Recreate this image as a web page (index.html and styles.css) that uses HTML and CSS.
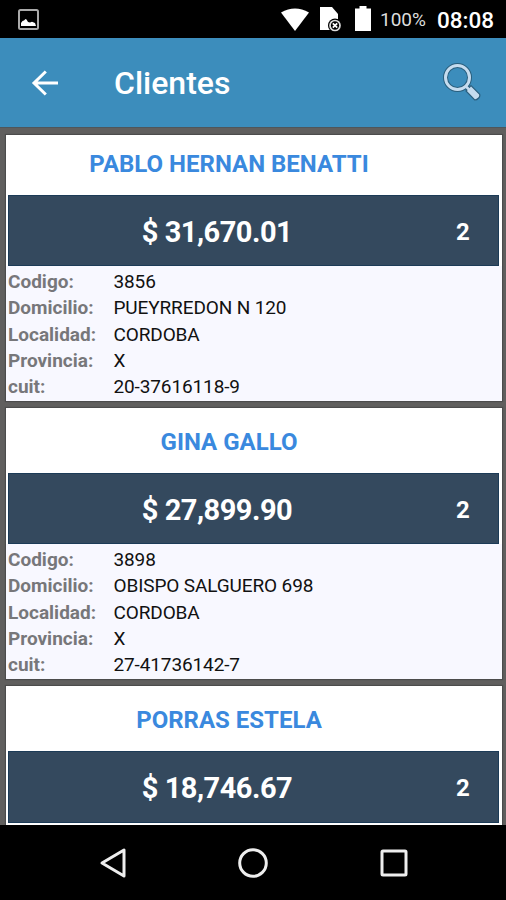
FILE: index.html
```
<!DOCTYPE html>
<html lang="es">
<head>
    <meta charset="utf-8">
    <title>Clientes</title>
    <link rel="stylesheet" href="styles.css">
</head>
<body>
    <div class="status-bar">
        <svg class="picture" width="21" height="21" viewBox="0 0 21 21">
            <rect x="1" y="1" width="19" height="19" rx="1.5" fill="none" stroke="#aaa" stroke-width="2"/>
            <path d="M3 17V14l1.500-2 1.500-.5 1.500-1.500 1 .5 1.500 2.500 2 .5 2-.8 3 1.300 1 3z" fill="#fff"/>
        </svg>
        <svg class="wifi" width="28" height="23" viewBox="0 0 28 23">
            <path d="M0 4.500Q14-3.500 28 4.500L14 23z" fill="#fff"/>
        </svg>
        <svg class="sim" width="22" height="25" viewBox="0 0 22 25">
            <path d="M0 0h12l6 7v16H0z" fill="#fff"/>
            <circle cx="15" cy="18.500" r="7" fill="#000"/>
            <circle cx="15" cy="18.500" r="5" fill="none" stroke="#ddd" stroke-width="1.700"/>
            <path d="M12.800 16.300l4.400 4.400M17.200 16.300l-4.400 4.400" stroke="#fff" stroke-width="1.800"/>
        </svg>
        <svg class="battery" width="16" height="25" viewBox="0 0 16 25">
            <path d="M4.500 0h7v2.500H16V25H0V2.500h4.500z" fill="#fff"/>
        </svg>
        <span class="percent">100%</span>
        <span class="clock">08:08</span>
    </div>

    <div class="toolbar">
        <svg class="back" width="28" height="28" viewBox="0 0 28 28">
            <path d="M14.800 2.500L3 14l11.800 11.500M3 14h24" fill="none" stroke="#fff" stroke-width="3"/>
        </svg>
        <h1>Clientes</h1>
        <svg class="search" width="38" height="39" viewBox="0 0 38 39">
            <circle cx="14.500" cy="14.500" r="12" fill="none" stroke="#2a5f7e" stroke-width="5"/>
            <path d="M22.500 23l4.500 4.500" stroke="#2a5f7e" stroke-width="5"/>
            <path d="M23 28l5-5.500 8.500 8.500q1 2-.8 4t-4 2z" fill="#c5dcef" stroke="#2a5f7e" stroke-width="1.200"/>
            <circle cx="14.500" cy="14.500" r="12" fill="none" stroke="#c5dcef" stroke-width="3"/>
            <path d="M22.500 23l4.500 4.500" stroke="#c5dcef" stroke-width="2.500"/>
        </svg>
    </div>

    <div class="list">
        <div class="card first">
            <h2>PABLO HERNAN BENATTI</h2>
            <div class="balance">
                <span class="amount">$ 31,670.01</span>
                <span class="count">2</span>
            </div>
            <dl>
                <dt>Codigo:</dt><dd>3856</dd>
                <dt>Domicilio:</dt><dd>PUEYRREDON N 120</dd>
                <dt>Localidad:</dt><dd>CORDOBA</dd>
                <dt>Provincia:</dt><dd>X</dd>
                <dt>cuit:</dt><dd>20-37616118-9</dd>
            </dl>
        </div>
        <div class="card">
            <h2>GINA GALLO</h2>
            <div class="balance">
                <span class="amount">$ 27,899.90</span>
                <span class="count">2</span>
            </div>
            <dl>
                <dt>Codigo:</dt><dd>3898</dd>
                <dt>Domicilio:</dt><dd>OBISPO SALGUERO 698</dd>
                <dt>Localidad:</dt><dd>CORDOBA</dd>
                <dt>Provincia:</dt><dd>X</dd>
                <dt>cuit:</dt><dd>27-41736142-7</dd>
            </dl>
        </div>
        <div class="card">
            <h2>PORRAS ESTELA</h2>
            <div class="balance">
                <span class="amount">$ 18,746.67</span>
                <span class="count">2</span>
            </div>
        </div>
    </div>

    <div class="nav-bar">
        <svg width="28" height="32" viewBox="0 0 28 32">
            <path d="M25 3v26L3 16z" fill="none" stroke="#eee" stroke-width="3" stroke-linejoin="round"/>
        </svg>
        <svg width="32" height="32" viewBox="0 0 32 32">
            <circle cx="15" cy="16" r="13.300" fill="none" stroke="#eee" stroke-width="3"/>
        </svg>
        <svg width="28" height="28" viewBox="0 0 28 28">
            <rect x="2" y="2" width="24" height="24" rx="1" fill="none" stroke="#eee" stroke-width="3"/>
        </svg>
    </div>
</body>
</html>
```

FILE: styles.css
```
* {
    box-sizing: border-box;
}

body {
    margin: 0;
    height: 900px;
    display: flex;
    flex-direction: column;
    overflow: hidden;
    background-color: #000;
    font-family: Roboto, sans-serif;
}

svg {
    display: block;
    flex-shrink: 0;
}

.status-bar {
    display: flex;
    align-items: center;
    flex-shrink: 0;
    height: 38px;
    padding: 1px 12px 0 18px;
    color: #fff;
}

.wifi {
    margin-left: auto;
}

.sim {
    margin-left: 11px;
}

.battery {
    margin-left: 13px;
    margin-top: -2px;
}

.percent {
    width: 46px;
    margin-left: 9px;
    font-size: 19px;
    color: #ddd;
}

.clock {
    width: 57px;
    margin-left: 11px;
    font-size: 22.5px;
    font-weight: 500;
}

.toolbar {
    display: flex;
    align-items: center;
    flex-shrink: 0;
    height: 89px;
    padding: 0 25px 0 31px;
    background-color: #3c8dbc;
}

.toolbar h1 {
    margin: 1px 0 0 55px;
    font-size: 32px;
    font-weight: 500;
    color: #fff;
}

.search {
    margin-left: auto;
}

.list {
    height: 698px;
    flex-shrink: 0;
    overflow: hidden;
    padding: 6.5px 4.5px 0 5.5px;
    background-color: #605f5e;
    border-top: 1px solid #4e565b;
}

.card {
    height: 271.7px;
    margin-bottom: 6.6px;
    padding: 0 2.5px;
    background-color: #fff;
    box-shadow: 0 0 1px 1px #4c4c4c;
}

.card h2 {
    display: flex;
    align-items: center;
    justify-content: center;
    height: 65.2px;
    margin: 0;
    padding: 3px 49px 0 0;
    font-size: 24px;
    font-weight: 700;
    color: #3a89de;
}

.card.first {
    height: 266.5px;
}

.card.first h2 {
    height: 60.2px;
    padding: 0 49px 2px 0;
}

.balance {
    display: flex;
    align-items: center;
    height: 71.7px;
    background-color: #34495e;
    border: 1px solid #1c3b57;
    color: #fff;
    font-weight: 700;
    text-align: center;
}

.amount {
    flex: 1;
    padding-top: 2px;
    font-size: 29px;
    letter-spacing: -0.5px;
}

.count {
    width: 73px;
    padding: 2px 0 0 3px;
    font-size: 24px;
}

.card dl {
    display: grid;
    grid-template-columns: 105.5px 1fr;
    grid-auto-rows: 26.3px;
    height: 134.6px;
    margin: 0 -2.5px;
    padding: 2.7px 2.5px 0;
    background-color: #f8f8ff;
    font-size: 19px;
    line-height: 26.3px;
}

.card dt {
    font-weight: 700;
    color: #77777a;
}

.card dd {
    margin: 0;
    color: #111;
    letter-spacing: -0.12px;
}

.nav-bar {
    display: flex;
    align-items: center;
    justify-content: space-between;
    flex-shrink: 0;
    height: 75px;
    padding: 1px 98px 0 99px;
    background-color: #000;
}
```
